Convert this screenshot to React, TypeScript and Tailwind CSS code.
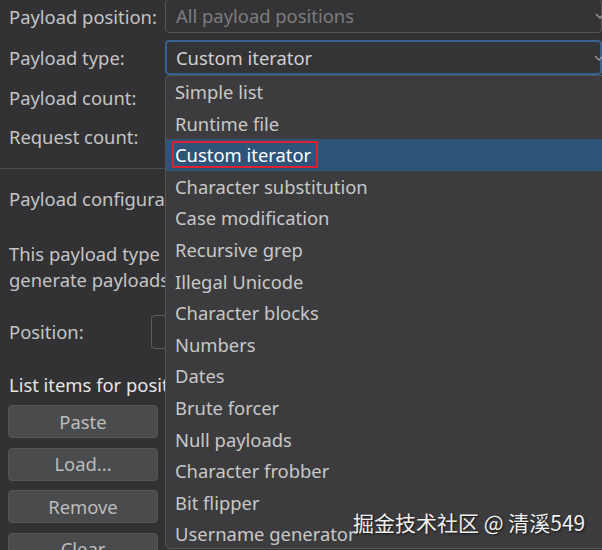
import React from "react";

const items = [
  "Simple list",
  "Runtime file",
  "Custom iterator",
  "Character substitution",
  "Case modification",
  "Recursive grep",
  "Illegal Unicode",
  "Character blocks",
  "Numbers",
  "Dates",
  "Brute forcer",
  "Null payloads",
  "Character frobber",
  "Bit flipper",
  "Username generator",
];

function Chevron() {
  return (
    <svg width="10" height="6" viewBox="0 0 10 6" className="absolute right-[-4px] top-1/2 -translate-y-1/2">
      <path d="M1 1l4 4 4-4" stroke="#9a9a9a" strokeWidth="1.3" fill="none" />
    </svg>
  );
}

export default function App() {
  return (
    <div
      className="relative w-[602px] h-[550px] overflow-hidden bg-[#323234] text-[18.4px] text-[#c4c4c4]"
      style={{ fontFamily: '"Noto Sans", "Noto Sans CJK SC", sans-serif' }}
    >
      {/* top form rows */}
      <div className="grid grid-cols-[165px_1fr] grid-rows-[34px_35px] gap-y-[6px] items-center">
        <div className="pl-[9px] whitespace-nowrap">Payload position:</div>
        <div className="relative h-[34px] mt-[-2px] border border-[#555557] rounded-[4px] bg-[#343436] pl-[10px] flex items-center text-[#7c7c7e]">
          All payload positions
          <Chevron />
        </div>
        <div className="pl-[9px] whitespace-nowrap">Payload type:</div>
        <div className="relative h-[35px] border-2 border-[#36628d] rounded-[4px] bg-[#343436] pl-[9px] flex items-center text-[#d0d0d0]">
          Custom iterator
          <Chevron />
        </div>
      </div>

      {/* left column */}
      <div className="w-[165px]">
        <div className="h-[46px] pl-[9px] flex items-center whitespace-nowrap">Payload count:</div>
        <div className="h-[32px] pl-[9px] flex items-center whitespace-nowrap">Request count:</div>
        <div className="h-[16px] border-b border-[#4a4a4c]" />
        <div className="h-[60px] pl-[9px] flex items-center whitespace-nowrap overflow-hidden">Payload configuration</div>
        <div className="pl-[9px] pt-[12px] leading-[26px] whitespace-nowrap overflow-hidden">
          <div>This payload type lets you</div>
          <div>generate payloads based</div>
        </div>
        <div className="flex items-center mt-[22px] h-[34px]">
          <div className="pl-[9px] w-[151px] shrink-0">Position:</div>
          <div className="h-[34px] w-[14px] shrink-0 border border-r-0 border-[#5a5a5c] rounded-l-[4px]" />
        </div>
        <div className="pl-[9px] mt-[23px] h-[26px] flex items-center text-[#e6e6e6] whitespace-nowrap overflow-hidden">
          List items for position
        </div>
        <div className="flex flex-col gap-[9.5px] pl-[8px] pr-[7px] mt-[7px]">
          {["Paste", "Load...", "Remove", "Clear"].map((b) => (
            <div
              key={b}
              className="h-[33px] shrink-0 rounded-[4px] bg-[#4a4b4d] border border-[#545557] flex items-center justify-center text-[#bdbdbd]"
            >
              {b}
            </div>
          ))}
        </div>
      </div>

      {/* dropdown popup */}
      <div className="absolute left-[165px] top-[75px] w-[450px] h-[474px] bg-[#3c3c3e] border border-[#545456] rounded-[5px]">
        {items.map((it) => (
          <div
            key={it}
            className={
              it === "Custom iterator"
                ? "h-[31.6px] flex items-center bg-[#2e5479] text-white pl-[6px]"
                : "h-[31.6px] flex items-center pl-[9px] text-[#c8c8c8]"
            }
          >
            {it === "Custom iterator" ? (
              <span className="border-2 border-[#e0202e] h-[27px] pl-[1px] pr-[5px] flex items-center">{it}</span>
            ) : (
              it
            )}
          </div>
        ))}
      </div>

      {/* watermark */}
      <div
        className="absolute left-[353px] top-[507px] text-[21px] text-[#f0f0f0] [text-shadow:1px_1px_2px_rgba(0,0,0,0.7)]"
        style={{ fontFamily: '"Noto Sans CJK SC", sans-serif' }}
      >
        掘金技术社区 @ 清溪549
      </div>
    </div>
  );
}
